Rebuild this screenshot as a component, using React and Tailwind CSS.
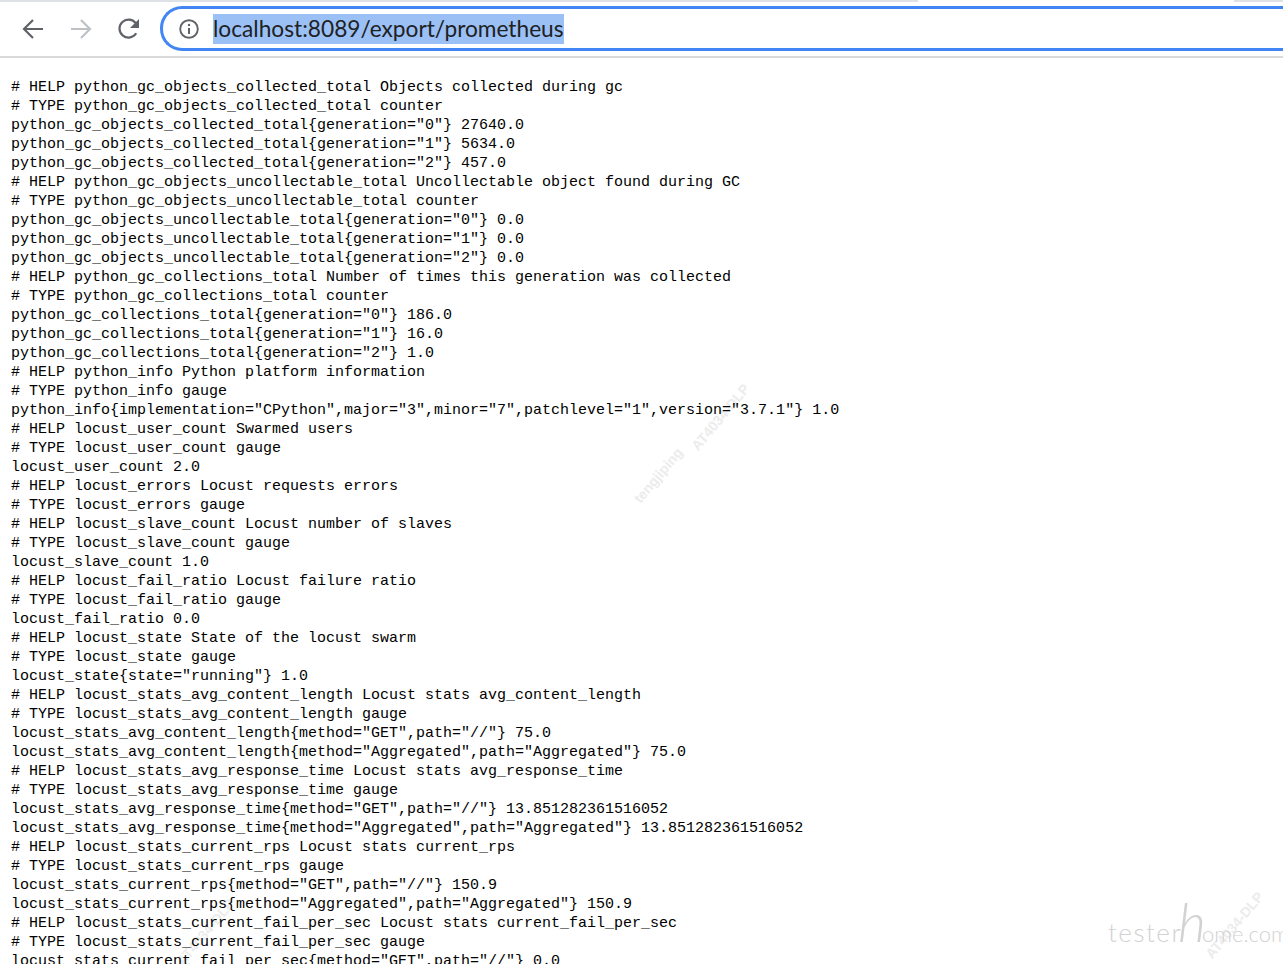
const LINES = `# HELP python_gc_objects_collected_total Objects collected during gc
# TYPE python_gc_objects_collected_total counter
python_gc_objects_collected_total{generation="0"} 27640.0
python_gc_objects_collected_total{generation="1"} 5634.0
python_gc_objects_collected_total{generation="2"} 457.0
# HELP python_gc_objects_uncollectable_total Uncollectable object found during GC
# TYPE python_gc_objects_uncollectable_total counter
python_gc_objects_uncollectable_total{generation="0"} 0.0
python_gc_objects_uncollectable_total{generation="1"} 0.0
python_gc_objects_uncollectable_total{generation="2"} 0.0
# HELP python_gc_collections_total Number of times this generation was collected
# TYPE python_gc_collections_total counter
python_gc_collections_total{generation="0"} 186.0
python_gc_collections_total{generation="1"} 16.0
python_gc_collections_total{generation="2"} 1.0
# HELP python_info Python platform information
# TYPE python_info gauge
python_info{implementation="CPython",major="3",minor="7",patchlevel="1",version="3.7.1"} 1.0
# HELP locust_user_count Swarmed users
# TYPE locust_user_count gauge
locust_user_count 2.0
# HELP locust_errors Locust requests errors
# TYPE locust_errors gauge
# HELP locust_slave_count Locust number of slaves
# TYPE locust_slave_count gauge
locust_slave_count 1.0
# HELP locust_fail_ratio Locust failure ratio
# TYPE locust_fail_ratio gauge
locust_fail_ratio 0.0
# HELP locust_state State of the locust swarm
# TYPE locust_state gauge
locust_state{state="running"} 1.0
# HELP locust_stats_avg_content_length Locust stats avg_content_length
# TYPE locust_stats_avg_content_length gauge
locust_stats_avg_content_length{method="GET",path="//"} 75.0
locust_stats_avg_content_length{method="Aggregated",path="Aggregated"} 75.0
# HELP locust_stats_avg_response_time Locust stats avg_response_time
# TYPE locust_stats_avg_response_time gauge
locust_stats_avg_response_time{method="GET",path="//"} 13.851282361516052
locust_stats_avg_response_time{method="Aggregated",path="Aggregated"} 13.851282361516052
# HELP locust_stats_current_rps Locust stats current_rps
# TYPE locust_stats_current_rps gauge
locust_stats_current_rps{method="GET",path="//"} 150.9
locust_stats_current_rps{method="Aggregated",path="Aggregated"} 150.9
# HELP locust_stats_current_fail_per_sec Locust stats current_fail_per_sec
# TYPE locust_stats_current_fail_per_sec gauge
locust_stats_current_fail_per_sec{method="GET",path="//"} 0.0`;

function Back({ color }) {
  return (
    <svg width="24" height="24" viewBox="0 0 24 24" fill="none" stroke={color} strokeWidth="2.2">
      <path d="M22 12H3.5M12 3l-9 9 9 9" />
    </svg>
  );
}

function Forward({ color }) {
  return (
    <svg width="24" height="24" viewBox="0 0 24 24" fill="none" stroke={color} strokeWidth="2.2">
      <path d="M2 12h18.5M12 3l9 9-9 9" />
    </svg>
  );
}

function Reload() {
  return (
    <svg width="24" height="24" viewBox="0 0 24 24" fill="none">
      <path d="M19.2 16.2A9 9 0 1 1 18.6 6" stroke="#5f6368" strokeWidth="2.2" />
      <path d="M22 2v9h-9z" fill="#5f6368" />
    </svg>
  );
}

function Info() {
  return (
    <svg width="20" height="20" viewBox="0 0 20 20" fill="none">
      <circle cx="10" cy="10" r="8.8" stroke="#5f6368" strokeWidth="1.9" />
      <path d="M10 9v6" stroke="#5f6368" strokeWidth="2" />
      <circle cx="10" cy="6" r="1.2" fill="#5f6368" />
    </svg>
  );
}

function Mark({ className, children }) {
  return (
    <span
      className={
        "absolute whitespace-pre font-['Liberation_Sans',sans-serif] font-bold text-[14px] text-[#ececec] origin-center " +
        className
      }
    >
      {children}
    </span>
  );
}

export default function App() {
  return (
    <div className="relative flex h-[964px] w-full flex-col overflow-hidden bg-white">
      <Mark className="left-[625px] top-[465px] -rotate-[50deg]">tengjiping</Mark>
      <Mark className="left-[680px] top-[407px] -rotate-[50deg]">AT4034-DLP</Mark>
      <Mark className="left-[1194px] top-[915px] -rotate-[50deg]">AT4034-DLP</Mark>
      <Mark className="left-[165px] top-[922px] -rotate-[50deg]">AT4034-DLP</Mark>
      <Mark className="left-[1135px] top-[985px] -rotate-[50deg]">tengjiping</Mark>

      <div className="flex h-[2px] shrink-0">
        <div className="w-[918px] bg-[#dee1e6]" />
        <div className="w-[316px] bg-white" />
        <div className="flex-1 bg-[#dee1e6]" />
      </div>
      <header className="relative flex h-[54px] shrink-0 items-start bg-white">
        <div className="flex h-[54px] w-[160px] shrink-0 items-center gap-6 pl-[21px]">
          <Back color="#5f6368" />
          <Forward color="#bdc1c6" />
          <Reload />
        </div>
        <div className="mt-1 flex h-[45px] flex-1 items-center rounded-l-[22px] border-y-[3px] border-l-[3px] border-[#4285f4] bg-white pl-[16px]">
          <Info />
          <span className="ml-[14px] flex h-[30px] items-center bg-[#9bc0f5] font-['Lato',sans-serif] text-[22.7px] leading-[30px] text-[#202124] whitespace-pre">
            localhost:8089/export/prometheus
          </span>
        </div>
      </header>
      <div className="relative h-[2px] shrink-0 bg-[#dadada]" />
      <pre className="relative pl-[11px] pt-[20px] font-['Liberation_Mono',monospace] text-[15px] leading-[19px] text-black">
        {LINES}
      </pre>

      <div className="absolute left-[1108px] top-[895px] flex items-baseline whitespace-pre font-['Lato',sans-serif] font-light leading-none text-[#d2d2d2]">
        <span className="text-[26px] tracking-[1.5px]">tester</span>
        <span className="text-[54px] italic -ml-[4px] -mr-[4px]">h</span>
        <span className="text-[22px]">ome.com</span>
      </div>
    </div>
  );
}
